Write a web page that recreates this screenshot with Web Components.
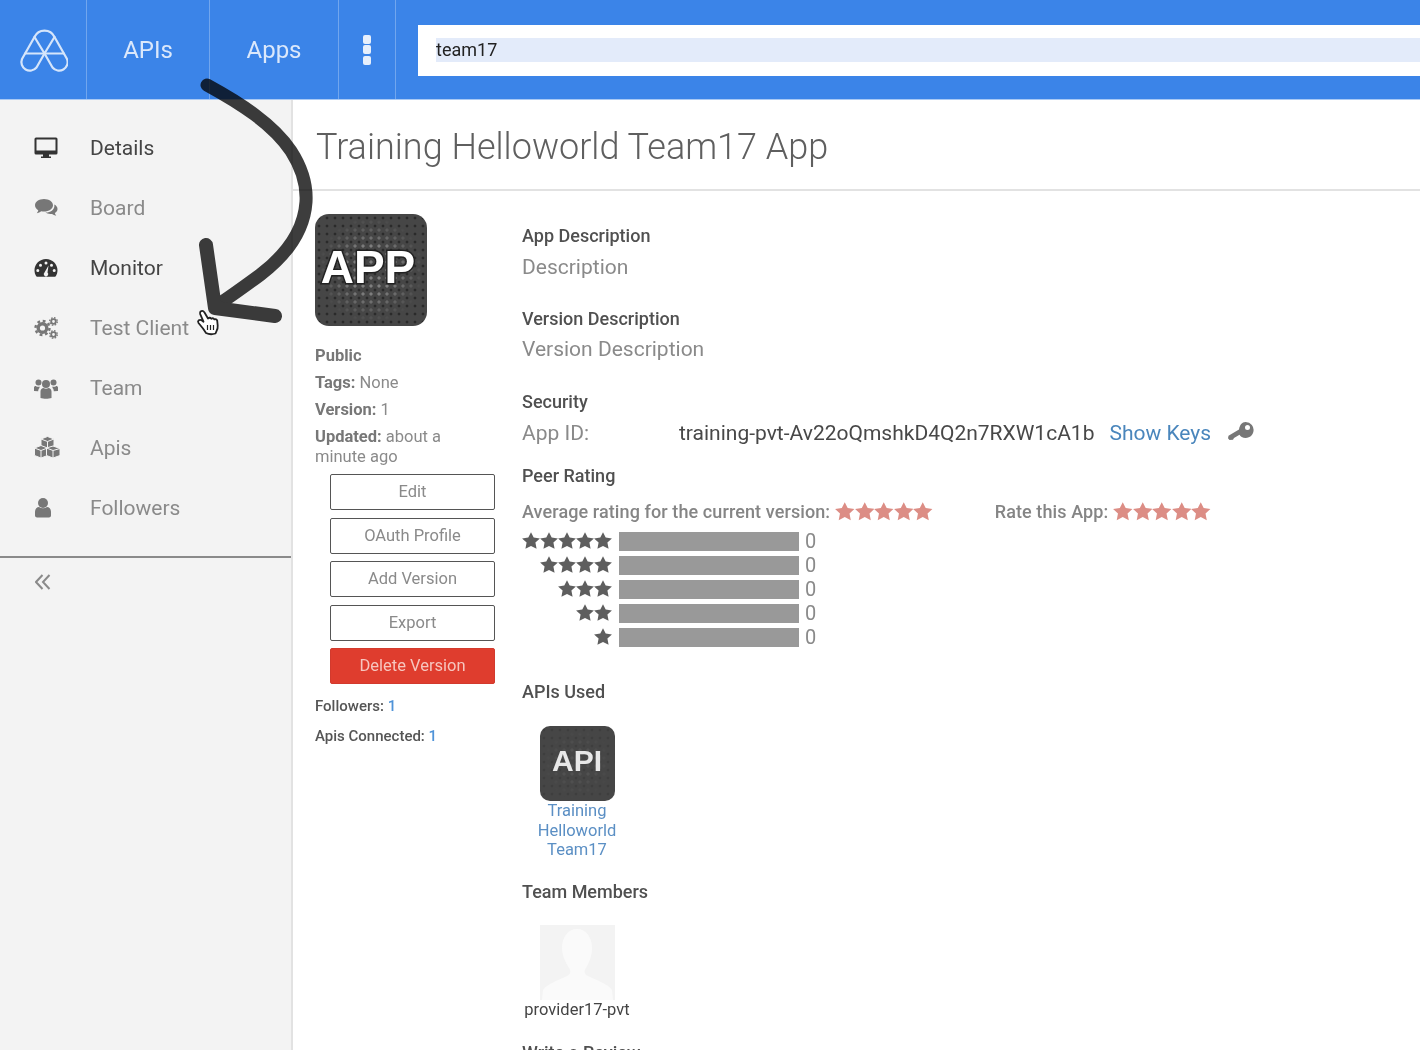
<!DOCTYPE html>
<html lang="en">
<head>
<meta charset="utf-8">
<title>Training Helloworld Team17 App</title>
<style>
  html,body{margin:0;height:1050px;overflow:hidden;background:#fff}
  body{font-family:Roboto,"Liberation Sans",sans-serif;position:relative;filter:blur(.45px)}
  .layout{display:flex;height:950px}
</style>
</head>
<body>
<app-header></app-header>
<div class="layout">
  <side-nav>
    <nav-item icon="desktop" strong>Details</nav-item>
    <nav-item icon="comments">Board</nav-item>
    <nav-item icon="gauge" strong>Monitor</nav-item>
    <nav-item icon="cogs">Test Client</nav-item>
    <nav-item icon="users">Team</nav-item>
    <nav-item icon="cubes">Apis</nav-item>
    <nav-item icon="user">Followers</nav-item>
  </side-nav>
  <app-page title-text="Training Helloworld Team17 App"></app-page>
</div>
<sketch-arrow></sketch-arrow>

<script>
/* small helper so each class only has to state its css + markup */
function shadow(el, css, html){
  const root = el.attachShadow({mode:'open'});
  root.innerHTML = `<style>${css}</style>${html}`;
  return root;
}

const STAR = 'M10 .2l3 6 6.900.9-5 4.700 1.300 6.900L10 15.500l-6.200 3.200 1.300-6.900-5-4.700 6.900-.9z';

const ICONS = {
  desktop:`<path d="M2 1.500h20a1.500 1.500 0 0 1 1.500 1.500v14a1.500 1.500 0 0 1-1.500 1.500h-7v2h2v1.500H7v-1.500h2v-2H2A1.500 1.500 0 0 1 .5 17V3A1.500 1.500 0 0 1 2 1.500zM2.500 3.500v11h19v-11z" fill-rule="evenodd"/>`,
  comments:`<path d="M10 3c5 0 9 2.800 9 6.300s-4 6.300-9 6.300c-1 0-1.800-.1-2.700-.3-1.300 1-2.800 1.600-4.500 1.900.7-.9 1.300-1.900 1.500-3C2.200 13 1 11.300 1 9.300 1 5.800 5 3 10 3z"/><path d="M20.300 8.500c2 1 3.200 2.600 3.200 4.400 0 1.700-1 3.200-2.700 4.200.2.900.7 1.800 1.400 2.600-1.700-.3-3-.9-4.200-1.800-2.500.4-5-.1-6.600-1.300 4.800.2 9-2.600 9-6.500z"/>`,
  gauge:`<path fill-rule="evenodd" d="M12 3C5.600 3 .5 8 .5 14.300c0 2.200.6 4.200 1.700 5.900.2.300.5.500.9.500h17.800c.4 0 .7-.2.900-.5 1.100-1.700 1.700-3.700 1.700-5.900C23.500 8 18.400 3 12 3zm0 2.500a1.500 1.500 0 1 1 0 3 1.500 1.500 0 0 1 0-3zM6.500 7.800a1.500 1.500 0 1 1 0 3 1.500 1.500 0 0 1 0-3zm11 0a1.500 1.500 0 1 1 0 3 1.500 1.500 0 0 1 0-3zM3.800 13a1.500 1.500 0 1 1 0 3 1.500 1.500 0 0 1 0-3zm16.400 0a1.500 1.500 0 1 1 0 3 1.500 1.500 0 0 1 0-3zM14.500 9.500l-1 7a2.200 2.200 0 1 1-3 0z"/>`,
  cogs:`<g fill="none" stroke="currentColor"><circle cx="8.500" cy="12" r="4.300" stroke-width="3.400"/><circle cx="8.500" cy="12" r="7" stroke-width="2.400" stroke-dasharray="2.800 2.700"/><circle cx="19.500" cy="5.500" r="2.300" stroke-width="1.800"/><circle cx="19.500" cy="5.500" r="3.800" stroke-width="1.300" stroke-dasharray="1.600 1.400"/><circle cx="19.500" cy="18.500" r="2.300" stroke-width="1.800"/><circle cx="19.500" cy="18.500" r="3.800" stroke-width="1.300" stroke-dasharray="1.600 1.400"/></g>`,
  users:`<circle cx="12" cy="8" r="4"/><circle cx="4.500" cy="6.500" r="3"/><circle cx="19.500" cy="6.500" r="3"/><path d="M6.500 22v-6.500c0-2 1.500-3.500 3-3.500 1.500 1 3.500 1 5 0 1.500 0 3 1.500 3 3.500V22c-3 1-8 1-11 0z"/><path d="M0 15v-3.500C0 10.500 1 10 1.700 10c1.300 1 3 1 4 .6-.2.500-.2 1-.2 1.400-.7.700-1.300 1.700-1.300 3.200zM24 15v-3.500c0-1-1-1.500-1.700-1.500-1.300 1-3 1-4 .6.200.5.200 1 .2 1.400.7.700 1.300 1.700 1.300 3.200z"/>`,
  cubes:`<g stroke="#f3f3f3" stroke-width="1" stroke-linejoin="round"><path d="M13.500 .5l6.500 2.500v7l-6.500 2.500L7 10V3z"/><path d="M7 3l6.500 2.500L20 3M13.500 5.500v7" fill="none"/><path d="M7 9.500l6.500 2.500v7.500L7 22 .5 19.500V12z"/><path d="M.5 12L7 14.500l6.500-2.500M7 14.500V22" fill="none"/><path d="M19 10l7 2.500v7L19 22l-6.500-2.500V12z"/><path d="M12.500 12l6.500 2.500 7-2M19 14.500V22" fill="none"/></g>`,
  user:`<circle cx="9" cy="7" r="5"/><path d="M1 19.500v-3.800c0-2.700 2-4.700 4-4.700 2.300 1.700 5.700 1.700 8 0 2 0 4 2 4 4.700v3.800c0 1.300-1 2-2 2H3c-1 0-2-.7-2-2z"/>`
};

class AppHeader extends HTMLElement{
  constructor(){
    super();
    shadow(this, `
      :host{display:flex;height:100px;background:#3b84e8;box-sizing:border-box;border-bottom:1px solid #a9c9f4;font-family:Roboto,"Liberation Sans",sans-serif}
      .cell{display:flex;align-items:center;justify-content:center;box-sizing:border-box;border-right:1px solid rgba(255,255,255,.28);color:#dbe8fb;font-size:24px}
      .logo{width:87px}
      .apis{width:123px}
      .apps{width:129px}
      .more{width:57px;flex-direction:column;gap:1.500px}
      .more i{width:8px;height:9px;border-radius:2px;background:#e6effc;display:block}
      .search{flex:1;margin:25px 0 23px 22px;background:#fff;padding:13px 0 14px 18px;display:flex}
      .search span{flex:1;background:#e3ebfa;color:#222;font-size:18px;line-height:24px}
    `, `
      <div class="cell logo">
        <svg width="50" height="50" viewBox="18.500 24.500 50 50" fill="none" stroke="#d5e5fb" stroke-width="2.200" stroke-linejoin="round" stroke-linecap="round">
          <path d="M45 53L35 36.500A11 11 0 0 1 55 36.500Z"/>
          <path d="M35 36.500L22.500 58.500A8.500 8.500 0 0 0 37 67L45 53"/>
          <path d="M55 36.500L67.500 58.500A8.500 8.500 0 0 1 53 67L45 53"/>
          <path d="M25.600 53H64.400"/>
        </svg>
      </div>
      <div class="cell apis">APIs</div>
      <div class="cell apps">Apps</div>
      <div class="cell more"><i></i><i></i><i></i></div>
      <div class="search"><span>team17</span></div>
    `);
  }
}

class SideNav extends HTMLElement{
  constructor(){
    super();
    shadow(this, `
      :host{display:block;width:293px;flex:none;box-sizing:border-box;background:#f3f3f3;border-right:2px solid #e2e2e2;padding-top:18px}
      .rule{border-top:2px solid #8a8a8a;margin-top:18px}
      .collapse{display:block;margin:16px 0 0 35px}
    `, `
      <slot></slot>
      <div class="rule"></div>
      <svg class="collapse" width="16" height="16" viewBox="0 0 16 16" fill="none" stroke="#8a8a8a" stroke-width="2">
        <path d="M7.500 1L1 8l6.500 7M14.500 1L8 8l6.500 7"/>
      </svg>
    `);
  }
}

class NavItem extends HTMLElement{
  constructor(){
    super();
    const on = this.hasAttribute('strong');
    shadow(this, `
      :host{display:flex;align-items:center;height:60px;padding-left:34px;font-size:21px;color:${on?'#444':'#8a8a8a'}}
      svg{width:24px;height:24px;overflow:visible;fill:${on?'#333':'#777'};color:${on?'#333':'#777'};flex:none;margin-right:32px}
    `, `<svg viewBox="0 0 24 24">${ICONS[this.getAttribute('icon')]}</svg><slot></slot>`);
  }
}

class BadgeIcon extends HTMLElement{
  constructor(){
    super();
    const size = Number(this.getAttribute('size'));
    const big = size > 100;
    shadow(this, `
      :host{display:flex;position:relative;align-items:center;justify-content:center;width:${size}px;height:${size}px;border-radius:${big?14:10}px;flex:none;overflow:hidden;
        background:radial-gradient(circle at 50% 50%,rgba(30,30,30,${big?.7:.2}) 0 1.200px,transparent 1.700px) 0 0/8px 8px,#464646}
      .glow{position:absolute;inset:0;background:radial-gradient(circle at 50% 50%,rgba(150,150,150,${big?.7:.15}) 0 1.300px,transparent 1.900px) 4px 4px/8px 8px;
        -webkit-mask:radial-gradient(circle at 50% 50%,#000 30%,transparent 68%);mask:radial-gradient(circle at 50% 50%,#000 30%,transparent 68%)}
      span{position:relative;font-family:"Liberation Sans",Arial,sans-serif;font-weight:700;color:#fff;font-size:${big?46:30}px;
        ${big?'-webkit-text-stroke:3px #222;paint-order:stroke fill;margin:-7px 6px 0 0':'color:#e8e8e8;margin-top:-5px'}}
    `, `<div class="glow"></div><span>${this.getAttribute('label')}</span>`);
  }
}

class ActionButton extends HTMLElement{
  constructor(){
    super();
    const red = this.hasAttribute('danger');
    shadow(this, `
      :host{display:flex;align-items:center;justify-content:center;box-sizing:border-box;width:165px;height:36px;margin:0 0 7.500px 15px;border-radius:2px;font-size:16.500px;
        ${red?'background:#df3d2e;border:1px solid #d23a2d;color:#f6c6bf':'background:#fff;border:1px solid #555;color:#8a8a8a'}}
    `, `<slot></slot>`);
  }
}

class AppSummary extends HTMLElement{
  constructor(){
    super();
    shadow(this, `
      :host{display:block;width:180px;flex:none;font-size:16.500px;color:#8a8a8a;line-height:20px}
      b{font-weight:700;color:#777}
      .meta{margin-top:20px;margin-bottom:5.500px}
      .meta div{margin-bottom:7px}
      .counts{font-size:15px;margin-top:12px;color:#555}
      .counts b{font-weight:500;color:#555}
      .counts div{margin-bottom:10px}
      .counts span{color:#4f93d8;font-weight:500}
    `, `
      <badge-icon size="112" label="APP"></badge-icon>
      <div class="meta">
        <div><b>Public</b></div>
        <div><b>Tags:</b> None</div>
        <div><b>Version:</b> 1</div>
        <div><b>Updated:</b> about a<br>minute ago</div>
      </div>
      <action-button>Edit</action-button>
      <action-button>OAuth Profile</action-button>
      <action-button>Add Version</action-button>
      <action-button>Export</action-button>
      <action-button danger>Delete Version</action-button>
      <div class="counts">
        <div><b>Followers:</b> <span>1</span></div>
        <div><b>Apis Connected:</b> <span>1</span></div>
      </div>
    `);
  }
}

class StarRow extends HTMLElement{
  constructor(){
    super();
    const n = Number(this.getAttribute('count'));
    const color = this.getAttribute('color');
    const size = this.getAttribute('size') || '19.5';
    let stars = '';
    for(let i=0;i<n;i++) stars += `<svg viewBox="0 0 20 20" width="${size}" height="${size}"><path fill="${color}" d="${STAR}"/></svg>`;
    shadow(this, `:host{display:inline-flex;align-items:center;justify-content:flex-end}svg{display:block;flex:none}`, stars);
  }
}

class RatingHistogram extends HTMLElement{
  constructor(){
    super();
    let rows = '';
    for(let n=5;n>=1;n--){
      rows += `<div class="row"><star-row count="${n}" color="#5e5e5e" size="18"></star-row><i></i><span>0</span></div>`;
    }
    shadow(this, `
      :host{display:block;font-size:20px;color:#8a8a8a}
      .row{display:flex;align-items:center;height:24px}
      star-row{width:90px}
      i{display:block;width:180px;height:19px;background:#999;margin:0 6px 0 7px}
    `, rows);
  }
}

class DetailBlock extends HTMLElement{
  constructor(){
    super();
    const heading = this.getAttribute('heading');
    shadow(this, `
      :host{display:block;color:#8a8a8a;font-size:21px;line-height:24px}
      h3{margin:0;font-size:18px;font-weight:500;color:#505050;line-height:22px}
    `, `<h3>${heading}</h3><slot></slot>`);
  }
}

class TileCard extends HTMLElement{
  constructor(){
    super();
    shadow(this, `
      :host{display:flex;flex-direction:column;align-items:center;width:112px;font-size:16.500px;line-height:19.500px;text-align:center;color:#5b8fc4}
    `, `<slot></slot>`);
  }
}

class AppPage extends HTMLElement{
  constructor(){
    super();
    shadow(this, `
      :host{display:block;flex:1;min-width:0;font-family:Roboto,"Liberation Sans",sans-serif}
      h1{margin:0;height:91px;box-sizing:border-box;border-bottom:2px solid #e2e2e2;padding:26px 0 0 23px;font-size:36px;font-weight:300;line-height:42px;color:#5f5f5f}
      .body{display:flex;padding:23px 0 0 22px}
      .details{margin-left:27px;flex:1;min-width:0}
      .id{display:flex;align-items:center}
      .id .lbl{width:157px}
      .id .val{color:#484848}
      .id a{color:#4a86bc;margin-left:15px}
      .id svg{margin-left:17px;margin-top:-4px}
      .rating{display:flex;align-items:center;font-size:18px;font-weight:500;letter-spacing:.1px;color:#858585;height:24px;margin-top:13px;margin-bottom:5px}
      .rating span{margin-right:5px}
      .rating .gap{width:62px}
      .tile{margin:22px 0 0 -1px}
      .member{color:#444;font-size:16.500px}
      .avatar{display:block}
    `, `
      <h1>${this.getAttribute('title-text')}</h1>
      <div class="body">
        <app-summary></app-summary>
        <div class="details">
          <detail-block heading="App Description" style="margin-top:11px;margin-bottom:29px"><div style="margin-top:8px">Description</div></detail-block>
          <detail-block heading="Version Description" style="margin-bottom:30px"><div style="margin-top:7px">Version Description</div></detail-block>
          <detail-block heading="Security" style="margin-bottom:20px">
            <div class="id" style="margin-top:8px">
              <span class="lbl">App ID:</span><span class="val">training-pvt-Av22oQmshkD4Q2n7RXW1cA1b</span><a>Show Keys</a>
              <svg width="26" height="18" viewBox="0 0 26 18"><path fill="#777" d="M17.500 0a8 8 0 1 1-3.800 15c-1-.5-1.700-1.400-2.200-2.300L6 16l-1 1.800-3.500.2L0 16.300l.5-2.500L11 7.400C11.800 3 14 0 17.500 0zm2 3a2.500 2.500 0 1 0 0 5 2.500 2.500 0 0 0 0-5z" fill-rule="evenodd"/></svg>
            </div>
          </detail-block>
          <detail-block heading="Peer Rating">
            <div class="rating">
              <span>Average rating for the current version:</span><star-row count="5" color="#dc8d85"></star-row>
              <div class="gap"></div>
              <span>Rate this App:</span><star-row count="5" color="#dc8d85"></star-row>
            </div>
            <rating-histogram></rating-histogram>
          </detail-block>
          <detail-block heading="APIs Used" style="margin-top:32px">
            <tile-card class="tile" style="margin-top:23px">
              <badge-icon size="75" label="API"></badge-icon>
              <div style="width:100px">Training<br>Helloworld<br>Team17</div>
            </tile-card>
          </detail-block>
          <detail-block heading="Team Members" style="margin-top:21px">
            <tile-card class="tile">
              <svg class="avatar" width="75" height="75" viewBox="0 0 75 75"><rect width="75" height="75" fill="#f3f3f3"/><path fill="#fafafa" d="M37 4c9 0 15 8 15 19 0 8-3 15-6 20-2 3-2 6 2 8 8 4 20 8 24 14l1 10H2l1-10c4-6 16-10 24-14 4-2 4-5 2-8-3-5-7-12-7-20C22 12 28 4 37 4z"/></svg>
              <div class="member">provider17-pvt</div>
            </tile-card>
          </detail-block>
          <detail-block heading="Write a Review" style="margin-top:23px"></detail-block>
        </div>
      </div>
    `);
  }
}

/* hand drawn arrow + pointer from the video, lies over everything */
class SketchArrow extends HTMLElement{
  constructor(){
    super();
    shadow(this, `
      :host{position:absolute;left:0;top:0;width:340px;height:345px;pointer-events:none}
      svg{position:absolute;left:0;top:0}
      .ink{mix-blend-mode:multiply}
    `, `
      <svg width="340" height="345" viewBox="0 0 340 345">
        <g class="ink" fill="none" stroke="#3d3d3d" stroke-width="13" stroke-linecap="round" stroke-linejoin="round">
          <path d="M207 85C240 103 273 124 291 151C302 168 307 185 306 202C304 232 285 256 260 275C245 286 230 297 216 306"/>
          <path d="M206 245L215 308L275 316" stroke-width="14"/>
        </g>
        <path fill="#fff" stroke="#222" stroke-width="1.800" stroke-linejoin="round" d="M200.500 311.500c1.500-1 3-.5 4 1l3.500 6c1-.8 2.500-.7 3.300.3 1-.7 2.400-.4 3.100.6 1.200-.5 2.400 0 2.800 1.200l.5 5c.2 2-.4 4-1.200 5.500l-1 2.400c-3 1-7 .8-9.500-.5l-3-4.500-4.500-5.500c-.7-1-.5-2 .3-2.700.9-.7 2.200-.5 3.200.2l1.500 1.200-3.300-7.600c-.4-1.100 0-2 .3-2.600z"/>
        <path stroke="#222" stroke-width="1.200" d="M207.500 325v5M210.500 325v5M213.500 325v5"/>
      </svg>
    `);
  }
}

customElements.define('star-row', StarRow);
customElements.define('badge-icon', BadgeIcon);
customElements.define('action-button', ActionButton);
customElements.define('nav-item', NavItem);
customElements.define('side-nav', SideNav);
customElements.define('app-header', AppHeader);
customElements.define('app-summary', AppSummary);
customElements.define('rating-histogram', RatingHistogram);
customElements.define('detail-block', DetailBlock);
customElements.define('tile-card', TileCard);
customElements.define('app-page', AppPage);
customElements.define('sketch-arrow', SketchArrow);
</script>
</body>
</html>
